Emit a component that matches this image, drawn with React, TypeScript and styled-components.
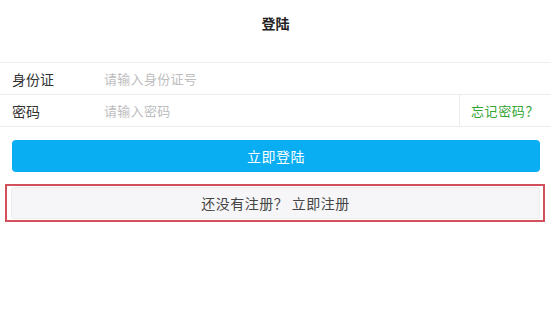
import React from "react";
import styled, { createGlobalStyle } from "styled-components";

const Global = createGlobalStyle`
  html, body { margin: 0; padding: 0; background: #ffffff; }
  body { font-family: "Liberation Sans", "Noto Sans CJK SC", sans-serif; }
`;

const Page = styled.div`
  width: 551px;
  min-height: 318px;
  background: #ffffff;
  display: flex;
  flex-direction: column;
`;

const Header = styled.header`
  height: 46px;
  display: flex;
  align-items: center;
  justify-content: center;
  font-family: "Noto Sans CJK SC", sans-serif;
  font-weight: 700;
  font-size: 14px;
  color: #222;
  margin-bottom: 16px;
`;

const Form = styled.div`
  border-top: 1px solid #f0f0f0;
  display: flex;
  flex-direction: column;
`;

const Row = styled.div`
  height: 31px;
  border-bottom: 1px solid #ececec;
  display: flex;
  align-items: center;
  padding-left: 12px;
`;

const Label = styled.span`
  width: 92px;
  font-family: "Noto Sans CJK SC", sans-serif;
  font-size: 14px;
  color: #333;
`;

const Input = styled.input`
  flex: 1;
  border: none;
  outline: none;
  background: transparent;
  padding: 0;
  font-family: "Noto Sans CJK SC", sans-serif;
  font-size: 13px;
  letter-spacing: 0.3px;
  color: #333;
  &::placeholder { color: #bdbdbd; }
`;

const Forgot = styled.a`
  align-self: stretch;
  width: 92px;
  border-left: 1px solid #ececec;
  display: flex;
  align-items: center;
  padding-left: 11px;
  box-sizing: border-box;
  font-family: "Noto Sans CJK SC", sans-serif;
  font-size: 13px;
  letter-spacing: 0.6px;
  color: #33a534;
  text-decoration: none;
`;

const Primary = styled.button`
  margin: 13px 11px 0 12px;
  height: 32px;
  border: none;
  border-radius: 4px;
  background: #09aef2;
  color: #ffffff;
  font-family: "Noto Sans CJK SC", sans-serif;
  font-size: 14px;
  letter-spacing: 0.5px;
`;

const Highlight = styled.div`
  margin: 12px 6px 0 5px;
  height: 33px;
  border: 2px solid #d2505c;
  padding: 1px 3px 0 4px;
  display: flex;
`;

const Secondary = styled.button`
  flex: 1;
  height: 32px;
  border: 1px solid #ececec;
  border-radius: 3px;
  background: #f6f6f8;
  color: #444;
  font-family: "Noto Sans CJK SC", serif;
  font-size: 14px;
  letter-spacing: 0.5px;
`;

export default function App() {
  return (
    <>
      <Global />
      <Page>
        <Header>登陆</Header>
        <Form>
          <Row>
            <Label>身份证</Label>
            <Input placeholder="请输入身份证号" />
          </Row>
          <Row>
            <Label>密码</Label>
            <Input type="password" placeholder="请输入密码" />
            <Forgot href="#">忘记密码？</Forgot>
          </Row>
        </Form>
        <Primary>立即登陆</Primary>
        <Highlight>
          <Secondary>还没有注册？ 立即注册</Secondary>
        </Highlight>
      </Page>
    </>
  );
}
